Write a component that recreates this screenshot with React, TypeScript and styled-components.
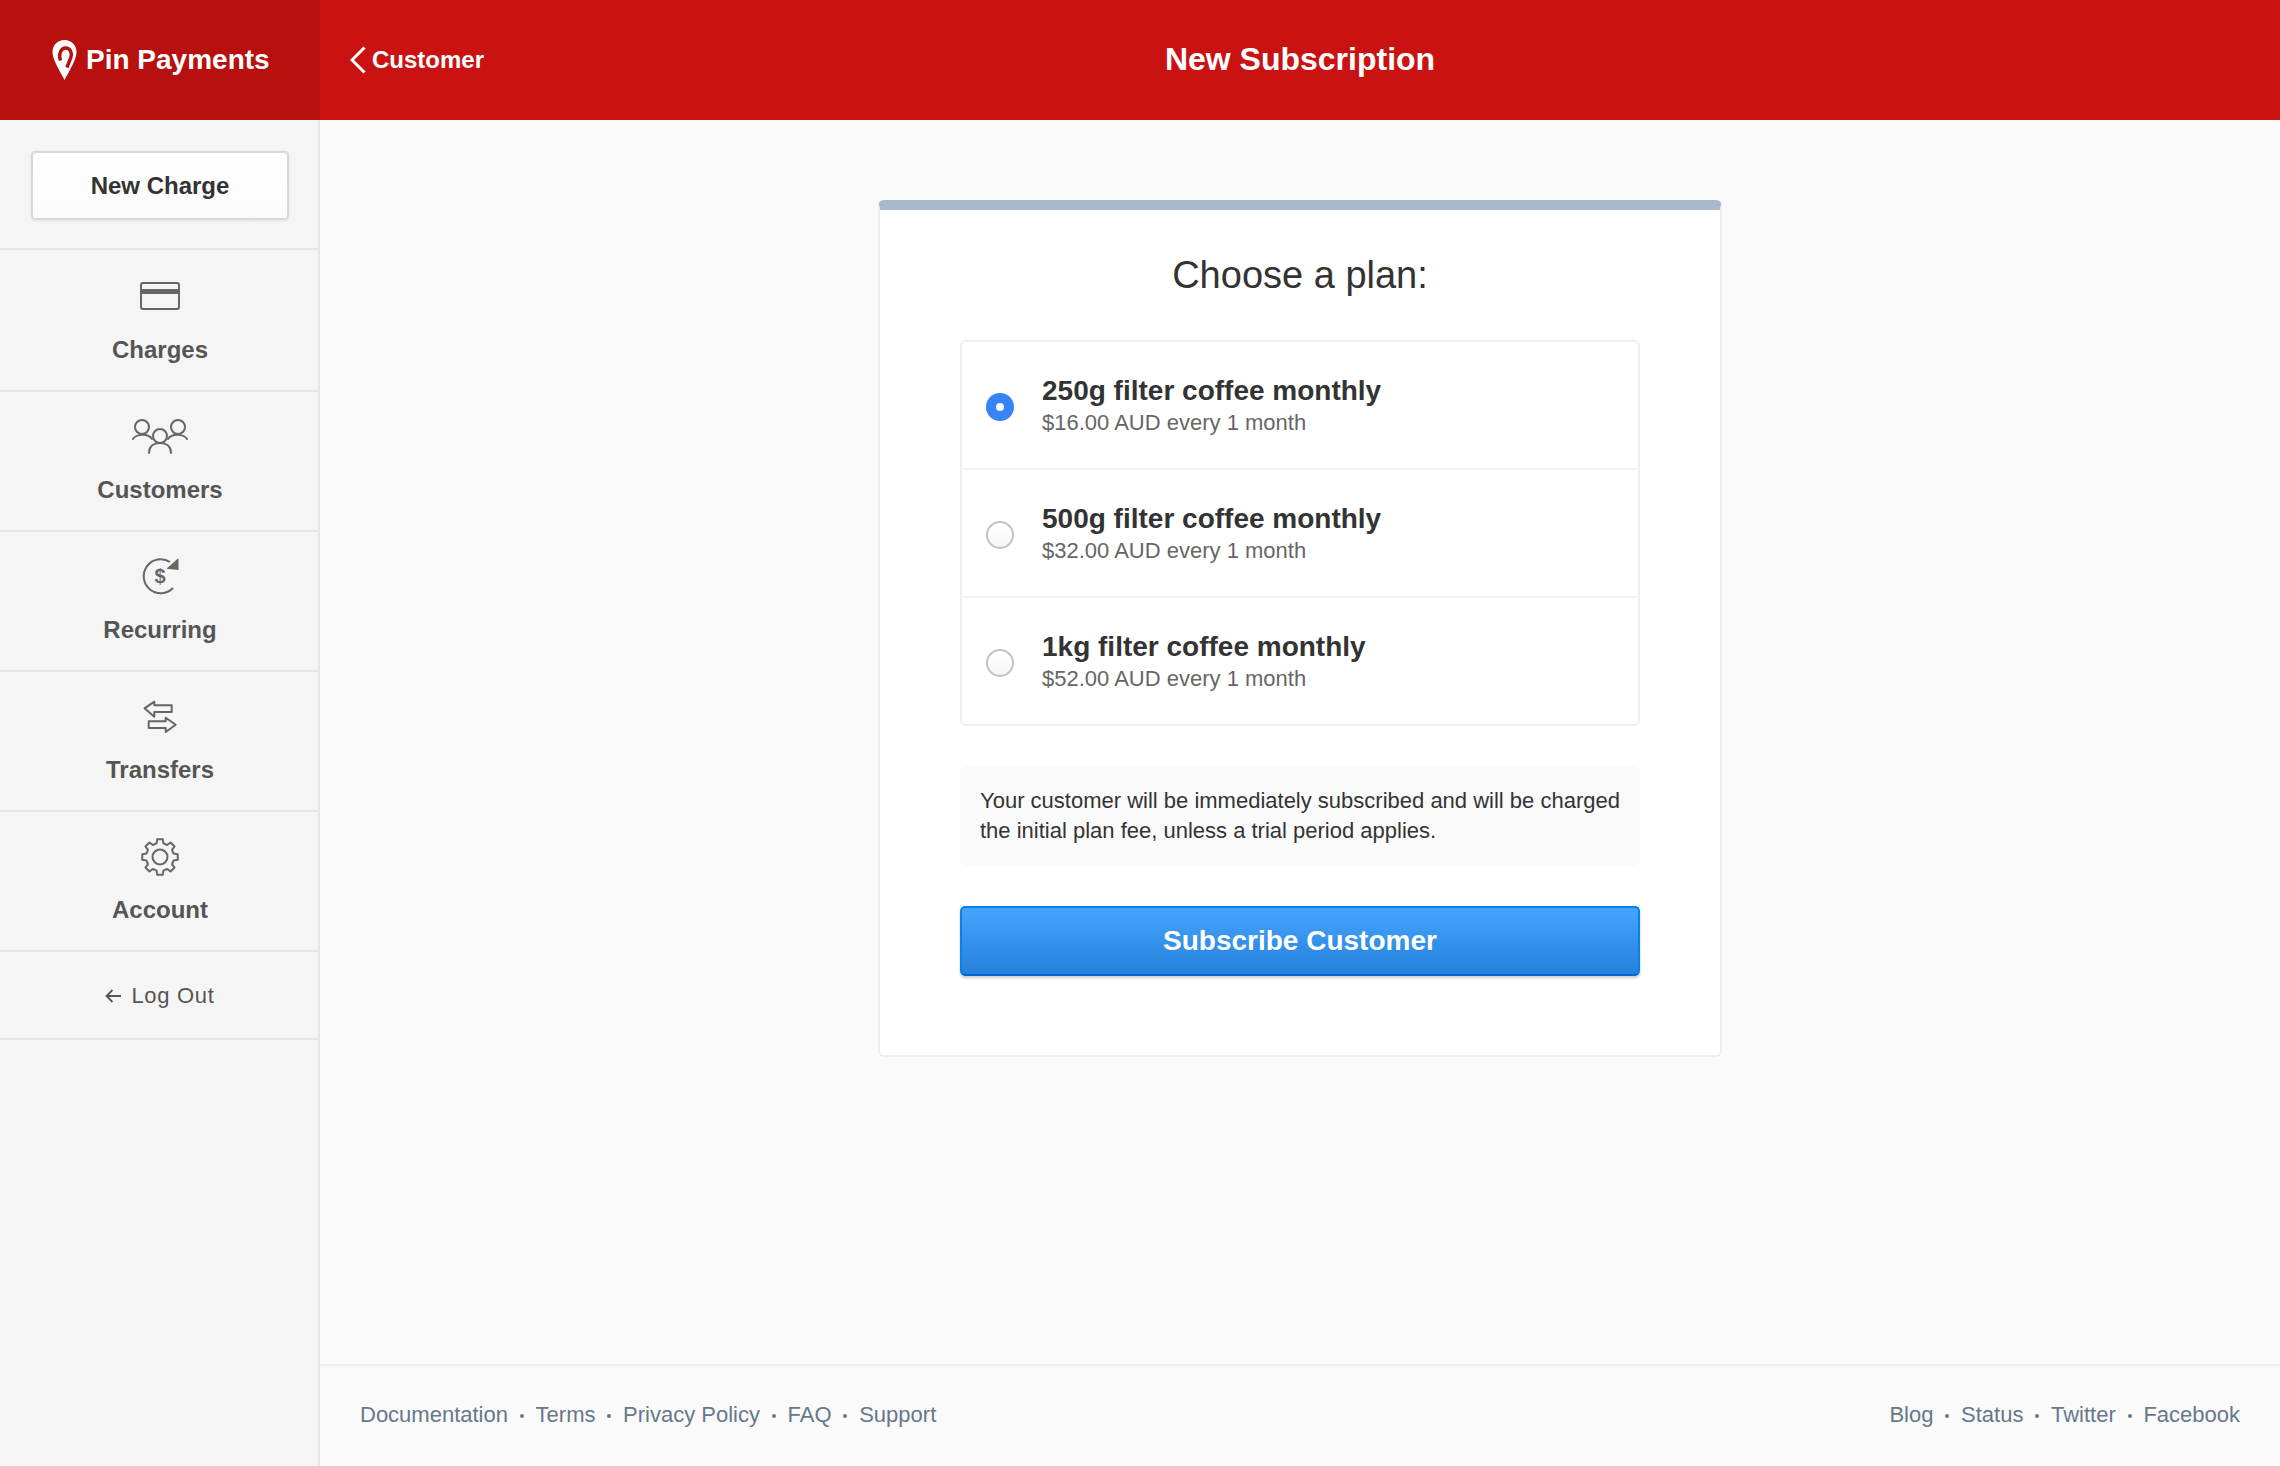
import React from 'react';
import styled, { createGlobalStyle } from 'styled-components';

const GlobalStyle = createGlobalStyle`
  html, body {
    margin: 0;
    padding: 0;
    background: #fafafa;
    font-family: "Liberation Sans", Arial, sans-serif;
  }
  * {
    box-sizing: border-box;
  }
`;

const Page = styled.div`
  display: grid;
  grid-template-columns: 320px 1fr;
  grid-template-rows: 120px 1fr;
  height: 1466px;
`;

const Brand = styled.div`
  display: flex;
  align-items: center;
  gap: 9px;
  padding-left: 52px;
  background: #b80f0f;
  color: #fff;
  font-size: 28px;
  font-weight: 700;
`;

const TopBar = styled.header`
  display: grid;
  grid-template-columns: 1fr auto 1fr;
  align-items: center;
  padding-left: 30px;
  padding-right: 30px;
  background: #ca1212;
  color: #fff;
`;

const BackLink = styled.a`
  display: flex;
  align-items: center;
  gap: 6px;
  font-size: 24px;
  font-weight: 700;
`;

const PageTitle = styled.h1`
  margin: 0;
  padding-bottom: 2px;
  font-size: 32px;
  font-weight: 700;
`;

const Sidebar = styled.nav`
  display: flex;
  flex-direction: column;
  background: #f5f5f5;
  box-shadow: inset -2px 0 0 #e6e6e6;
`;

const ChargeSection = styled.div`
  height: 130px;
  padding: 31px 31px 0;
  border-bottom: 2px solid #e6e6e6;
`;

const ChargeButton = styled.button`
  display: block;
  width: 258px;
  height: 69px;
  padding: 1px 0 0;
  background: linear-gradient(#fff, #fbfbfb);
  border: 2px solid #d3d9e0;
  border-radius: 4px;
  box-shadow: 0 1px 3px rgba(0, 0, 0, 0.08);
  color: #333;
  font-family: inherit;
  font-size: 24px;
  font-weight: 700;
`;

const NavItem = styled.a`
  display: flex;
  flex-direction: column;
  align-items: center;
  height: 140px;
  padding-top: 14px;
  border-bottom: 2px solid #e6e6e6;
  color: #555;
  font-size: 24px;
  font-weight: 700;
  line-height: 30px;

  &:first-of-type {
    height: 142px;
    padding-top: 16px;
  }

  svg {
    margin-bottom: 9px;
  }
`;

const LogOut = styled.a`
  display: flex;
  align-items: center;
  justify-content: center;
  gap: 10px;
  height: 88px;
  padding-top: 2px;
  border-bottom: 2px solid #e6e6e6;
  color: #555;
  font-size: 22px;
  letter-spacing: 0.7px;
`;

const Main = styled.main`
  display: flex;
  flex-direction: column;
  min-width: 0;
  background: #fafafa;
`;

const Content = styled.div`
  flex: 1;
  display: flex;
  justify-content: center;
  align-items: flex-start;
  padding-top: 80px;
`;

const Card = styled.section`
  width: 844px;
  padding: 0 80px 79px;
  background: #fff;
  border: 2px solid #eee;
  border-top: 10px solid #a9b9cd;
  border-radius: 6px;
`;

const CardTitle = styled.h2`
  margin: 0;
  padding-top: 42px;
  height: 130px;
  color: #333;
  font-size: 38px;
  font-weight: 400;
  line-height: 46px;
  text-align: center;
`;

const PlanList = styled.div`
  border: 2px solid #eee;
  border-radius: 6px;
  background: #fff;
`;

const PlanRow = styled.label`
  display: flex;
  align-items: center;
  gap: 28px;
  height: 128px;
  padding-left: 24px;
  border-bottom: 2px solid #f3f3f3;

  &:last-child {
    height: 126px;
    border-bottom: 0;
  }
`;

const Radio = styled.span<{ $checked?: boolean }>`
  display: flex;
  flex: none;
  align-items: center;
  justify-content: center;
  width: 28px;
  height: 28px;
  margin-top: 4px;
  border-radius: 50%;
  background: ${p => (p.$checked ? '#3684f8' : 'linear-gradient(#fff, #f6f6f6)')};
  border: ${p => (p.$checked ? '0' : '2px solid #c4c4c4')};

  &::after {
    content: '';
    display: ${p => (p.$checked ? 'block' : 'none')};
    width: 8px;
    height: 8px;
    border-radius: 50%;
    background: #fff;
  }
`;

const PlanText = styled.div`
  padding-top: 1px;
`;

const PlanName = styled.div`
  color: #333;
  font-size: 28px;
  font-weight: 700;
  line-height: 34px;
`;

const PlanPrice = styled.div`
  margin-top: 1px;
  color: #666;
  font-size: 22px;
  line-height: 28px;
`;

const Note = styled.p`
  margin: 40px 0 0;
  height: 100px;
  padding: 20px 20px;
  background: #fafafa;
  border-radius: 6px;
  color: #333;
  font-size: 22px;
  line-height: 30px;
`;

const SubscribeButton = styled.button`
  display: block;
  width: 100%;
  height: 70px;
  margin-top: 40px;
  padding: 0;
  background: linear-gradient(#45a5fd, #2580dc);
  border: 2px solid #0a80e8;
  border-bottom-color: #0066cc;
  border-radius: 5px;
  box-shadow: 0 2px 3px rgba(0, 0, 0, 0.2);
  color: #fff;
  font-family: inherit;
  font-size: 28px;
  font-weight: 700;
`;

const Footer = styled.footer`
  display: flex;
  align-items: center;
  justify-content: space-between;
  height: 102px;
  padding: 0 40px 2px;
  border-top: 2px solid #eee;
  color: #66788a;
  font-size: 22px;
`;

const FooterLinks = styled.div`
  display: flex;
  align-items: center;
`;

const FooterLink = styled.a`
  & + &::before {
    content: '';
    display: inline-block;
    width: 4px;
    height: 4px;
    margin: 0 11.8px;
    border-radius: 50%;
    background: #66788a;
    vertical-align: 4px;
  }
`;

const PinLogo = () => (
  <svg width="25" height="40" viewBox="0 0 24 40">
    <path
      fill="#fff"
      d="M12 0C5 0 0 5.4 0 12c0 8 8 20 12 28 4-8 12-20 12-28C24 5.4 19 0 12 0Z"
    />
    <path
      fill="none"
      stroke="#b80f0f"
      strokeWidth="3.4"
      d="M8 20.5C5.6 14 8.6 8 13 8c4.8 0 7 5.2 5.4 9.5L14.4 27.5"
    />
  </svg>
);

const Chevron = () => (
  <svg width="16" height="28" viewBox="0 0 16 28">
    <path fill="none" stroke="#fff" strokeWidth="3" d="M14.5 1.5 2 14l12.5 12.5" />
  </svg>
);

const BackArrow = () => (
  <svg width="16" height="14" viewBox="0 0 16 14">
    <path fill="none" stroke="#555" strokeWidth="1.8" d="M16 7H1.5M7.5 1 1.5 7l6 6" />
  </svg>
);

const iconProps = {
  width: 80,
  height: 60,
  viewBox: '0 0 80 60',
  fill: 'none',
  stroke: '#666',
  strokeWidth: 2,
};

const CardIcon = () => (
  <svg {...iconProps}>
    <rect x="21" y="17" width="38" height="26" rx="2" />
    <path strokeWidth="5" d="M21 25.5h38" />
  </svg>
);

const CustomersIcon = () => (
  <svg {...iconProps} strokeLinecap="round">
    <circle cx="22" cy="21" r="7" />
    <path d="M13 33c3-5 15-6 19 0" />
    <circle cx="58" cy="21" r="7" />
    <path d="M48 33c4-6 16-5 19 0" />
    <circle cx="40" cy="30" r="7" />
    <path d="M29 47c0-7 5-10 11-10s11 3 11 10" />
  </svg>
);

const RecurringIcon = () => (
  <svg {...iconProps}>
    <path d="M53 42A17 17 0 1 1 50 16" />
    <path fill="#666" stroke="none" d="M46.5 22.8 58.5 12v12Z" />
    <text x="40" y="37" fill="#666" stroke="none" fontSize="20" fontWeight="700" textAnchor="middle">
      $
    </text>
  </svg>
);

const TransfersIcon = () => (
  <svg {...iconProps} strokeLinejoin="round">
    <path d="M24.5 22.3 34.3 15.7v3.6h17.4V26H34.3v4.7Z" />
    <path d="M55.7 38.7 45.7 31.7v3.6H28.7V42h17v4Z" />
  </svg>
);

const gearPath = () => {
  const point = (deg: number, r: number) => {
    const a = ((deg - 90) * Math.PI) / 180;
    return `${(40 + r * Math.cos(a)).toFixed(2)} ${(31 + r * Math.sin(a)).toFixed(2)}`;
  };
  const parts: string[] = [];
  for (let i = 0; i < 8; i += 1) {
    const c = i * 45;
    parts.push(point(c - 14, 14), point(c - 9, 18), point(c + 9, 18), point(c + 14, 14));
  }
  return `M${parts.join('L')}Z`;
};

const AccountIcon = () => (
  <svg {...iconProps} strokeLinejoin="round">
    <path d={gearPath()} />
    <circle cx="40" cy="31" r="7.5" />
  </svg>
);

const navItems = [
  { label: 'Charges', icon: <CardIcon /> },
  { label: 'Customers', icon: <CustomersIcon /> },
  { label: 'Recurring', icon: <RecurringIcon /> },
  { label: 'Transfers', icon: <TransfersIcon /> },
  { label: 'Account', icon: <AccountIcon /> },
];

const plans = [
  { name: '250g filter coffee monthly', price: '$16.00 AUD every 1 month', checked: true },
  { name: '500g filter coffee monthly', price: '$32.00 AUD every 1 month' },
  { name: '1kg filter coffee monthly', price: '$52.00 AUD every 1 month' },
];

export default function App() {
  return (
    <Page>
      <GlobalStyle />
      <Brand>
        <PinLogo />
        Pin Payments
      </Brand>
      <TopBar>
        <BackLink>
          <Chevron />
          Customer
        </BackLink>
        <PageTitle>New Subscription</PageTitle>
      </TopBar>
      <Sidebar>
        <ChargeSection>
          <ChargeButton type="button">New Charge</ChargeButton>
        </ChargeSection>
        {navItems.map(item => (
          <NavItem key={item.label}>
            {item.icon}
            {item.label}
          </NavItem>
        ))}
        <LogOut>
          <BackArrow />
          Log Out
        </LogOut>
      </Sidebar>
      <Main>
        <Content>
          <Card>
            <CardTitle>Choose a plan:</CardTitle>
            <PlanList>
              {plans.map(plan => (
                <PlanRow key={plan.name}>
                  <Radio $checked={plan.checked} />
                  <PlanText>
                    <PlanName>{plan.name}</PlanName>
                    <PlanPrice>{plan.price}</PlanPrice>
                  </PlanText>
                </PlanRow>
              ))}
            </PlanList>
            <Note>
              Your customer will be immediately subscribed and will be charged
              the initial plan fee, unless a trial period applies.
            </Note>
            <SubscribeButton type="button">Subscribe Customer</SubscribeButton>
          </Card>
        </Content>
        <Footer>
          <FooterLinks>
            <FooterLink>Documentation</FooterLink>
            <FooterLink>Terms</FooterLink>
            <FooterLink>Privacy Policy</FooterLink>
            <FooterLink>FAQ</FooterLink>
            <FooterLink>Support</FooterLink>
          </FooterLinks>
          <FooterLinks>
            <FooterLink>Blog</FooterLink>
            <FooterLink>Status</FooterLink>
            <FooterLink>Twitter</FooterLink>
            <FooterLink>Facebook</FooterLink>
          </FooterLinks>
        </Footer>
      </Main>
    </Page>
  );
}
